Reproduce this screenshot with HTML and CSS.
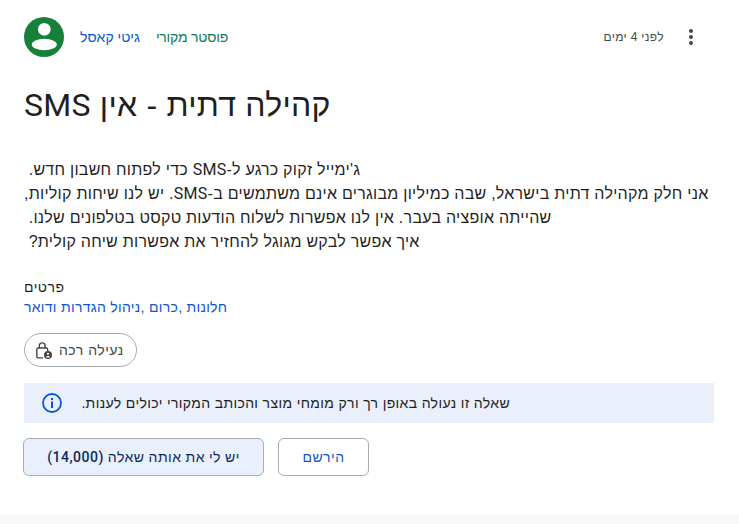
FILE: index.html
```html
<!DOCTYPE html>
<html lang="he">
<head>
    <meta charset="UTF-8">
    <meta name="viewport" content="width=device-width, initial-scale=1.0">
    <title>קהילה דתית - אין SMS</title>
    <link rel="stylesheet" href="styles.css">
</head>
<body>
    <div class="card">
        <div class="post-header">
            <svg class="avatar" viewBox="0 0 40 40">
                <circle cx="20" cy="20" r="20" fill="#188038"/>
                <circle cx="20.300" cy="12.300" r="6.300" fill="#fff"/>
                <ellipse cx="20.300" cy="27.500" rx="12.500" ry="5.800" fill="#fff"/>
            </svg>
            <a class="author" href="#" dir="rtl">גיטי קאסל</a>
            <span class="badge" dir="rtl">פוסטר מקורי</span>
            <span class="time" dir="rtl">לפני 4 ימים</span>
            <svg class="menu" viewBox="0 0 4 16">
                <circle cx="2" cy="2" r="2"/>
                <circle cx="2" cy="8" r="2"/>
                <circle cx="2" cy="14" r="2"/>
            </svg>
        </div>

        <h1 dir="rtl">קהילה דתית - אין <span class="latin">SMS</span></h1>

        <div class="post-body">
            <p dir="rtl">ג'ימייל זקוק כרגע ל-<span class="latin">SMS</span> כדי לפתוח חשבון חדש.&nbsp;</p>
            <p dir="rtl">אני חלק מקהילה דתית בישראל, שבה כמיליון מבוגרים אינם משתמשים ב-<span class="latin">SMS</span>. יש לנו שיחות קוליות,</p>
            <p dir="rtl">שהייתה אופציה בעבר. אין לנו אפשרות לשלוח הודעות טקסט בטלפונים שלנו.&nbsp;</p>
            <p dir="rtl">איך אפשר לבקש מגוגל להחזיר את אפשרות שיחה קולית?&nbsp;</p>
        </div>

        <div class="details">
            <div class="details-title" dir="rtl">פרטים</div>
            <div class="details-links" dir="rtl"><a href="#">חלונות</a> ,<a href="#">כרום</a> ,<a href="#">ניהול הגדרות ודואר</a></div>
        </div>

        <div class="chip">
            <svg class="lock" viewBox="0 0 16 17">
                <path d="M7 15.900H2.200A1.400 1.400 0 0 1 .8 14.500V7.400A1.400 1.400 0 0 1 2.200 6h8.100a1.400 1.400 0 0 1 1.400 1.400V9" fill="none" stroke="#444746" stroke-width="1.400"/>
                <path d="M3.300 6V3.800a2.900 2.900 0 0 1 5.800 0V6" fill="none" stroke="#444746" stroke-width="1.400"/>
                <circle cx="12" cy="13" r="4" fill="#444746"/>
                <circle cx="12" cy="11.800" r="1.100" fill="#fff"/>
                <path d="M9.900 15.400c.4-1 1.200-1.500 2.100-1.500s1.700.5 2.100 1.500z" fill="#fff"/>
            </svg>
            <span dir="rtl">נעילה רכה</span>
        </div>

        <div class="notice">
            <svg class="info" viewBox="0 0 20 20">
                <circle cx="10" cy="10" r="9" fill="none" stroke="#0b57d0" stroke-width="1.800"/>
                <circle cx="10" cy="6" r="1.200" fill="#0b57d0"/>
                <rect x="9" y="8.500" width="2" height="6.500" fill="#0b57d0"/>
            </svg>
            <span class="notice-text" dir="rtl">שאלה זו נעולה באופן רך ורק מומחי מוצר והכותב המקורי יכולים לענות.</span>
        </div>

        <div class="actions">
            <button class="btn btn-same" dir="rtl">יש לי את אותה שאלה <span class="latin">(14,000)</span></button>
            <button class="btn btn-sub" dir="rtl">הירשם</button>
        </div>
    </div>
    <div class="page-bottom"></div>
</body>
</html>
```

FILE: styles.css
```css
html, body {
    height: 100%;
}
body {
    font-family: "Liberation Sans", sans-serif;
    margin: 0;
    padding: 0;
    background-color: #ffffff;
    color: #1f1f1f;
    overflow: hidden;
    display: flex;
    flex-direction: column;
}
.latin {
    font-family: Roboto, sans-serif;
}
.card {
    height: 515px;
    box-sizing: border-box;
    padding: 17px 25px 0 24px;
    flex: none;
}
.page-bottom {
    flex: 1;
    background-color: #f8f8f8;
}
.post-header {
    display: flex;
    align-items: center;
    height: 40px;
    font-size: 14px;
}
.avatar {
    width: 40px;
    height: 40px;
    margin-right: 16px;
}
.author {
    color: #0b57d0;
    text-decoration: none;
    margin-right: 16px;
}
.badge {
    color: #0f7a55;
    letter-spacing: -0.2px;
}
.time {
    margin-left: auto;
    color: #444746;
    font-size: 12px;
    letter-spacing: 0.35px;
    margin-right: 25px;
}
.menu {
    width: 4px;
    height: 16px;
    fill: #444746;
    margin-right: 21px;
}
h1 {
    font-size: 32px;
    font-weight: 400;
    letter-spacing: 0.25px;
    line-height: 40px;
    margin: 28px 0 0;
    text-align: left;
    color: #1f1f1f;
}
.post-body {
    margin-top: 33px;
    font-size: 16px;
    letter-spacing: 0.26px;
    line-height: 24px;
}
.post-body p {
    margin: 0;
    text-align: left;
}
.details {
    margin-top: 23px;
    font-size: 14px;
    line-height: 20px;
}
.details-title {
    font-family: Roboto, sans-serif;
    text-align: left;
    font-weight: 500;
    letter-spacing: 0.5px;
}
.details-links {
    text-align: left;
    letter-spacing: 0.3px;
    color: #0b57d0;
}
.details-links a {
    color: #0b57d0;
    text-decoration: none;
}
.chip {
    display: inline-flex;
    align-items: center;
    gap: 7px;
    height: 34px;
    box-sizing: border-box;
    border: 1px solid #a8abb0;
    border-radius: 17px;
    padding: 0 12px 0 11px;
    margin-top: 16px;
    font-size: 14px;
    letter-spacing: 0.5px;
    color: #444746;
}
.lock {
    width: 16px;
    height: 17px;
}
.notice {
    display: flex;
    align-items: center;
    justify-content: space-between;
    height: 40px;
    margin-top: 16px;
    background-color: #e9f0fc;
    padding: 0 204px 0 18px;
    font-size: 14px;
    letter-spacing: 0.36px;
    color: #1f1f1f;
}
.info {
    width: 20px;
    height: 20px;
}
.actions {
    display: flex;
    gap: 14px;
    margin: 15px 0 0 -1px;
}
.btn {
    height: 38px;
    box-sizing: border-box;
    border: 1px solid #a8abb0;
    border-radius: 6px;
    font-family: Roboto, sans-serif;
    font-size: 14px;
    font-weight: 500;
    letter-spacing: 0.5px;
    padding: 0;
}
.btn-same {
    width: 241px;
    background-color: #e9f0fc;
    color: #0b2a5c;
}
.btn-sub {
    width: 91px;
    background-color: #ffffff;
    color: #0b57d0;
}
```
